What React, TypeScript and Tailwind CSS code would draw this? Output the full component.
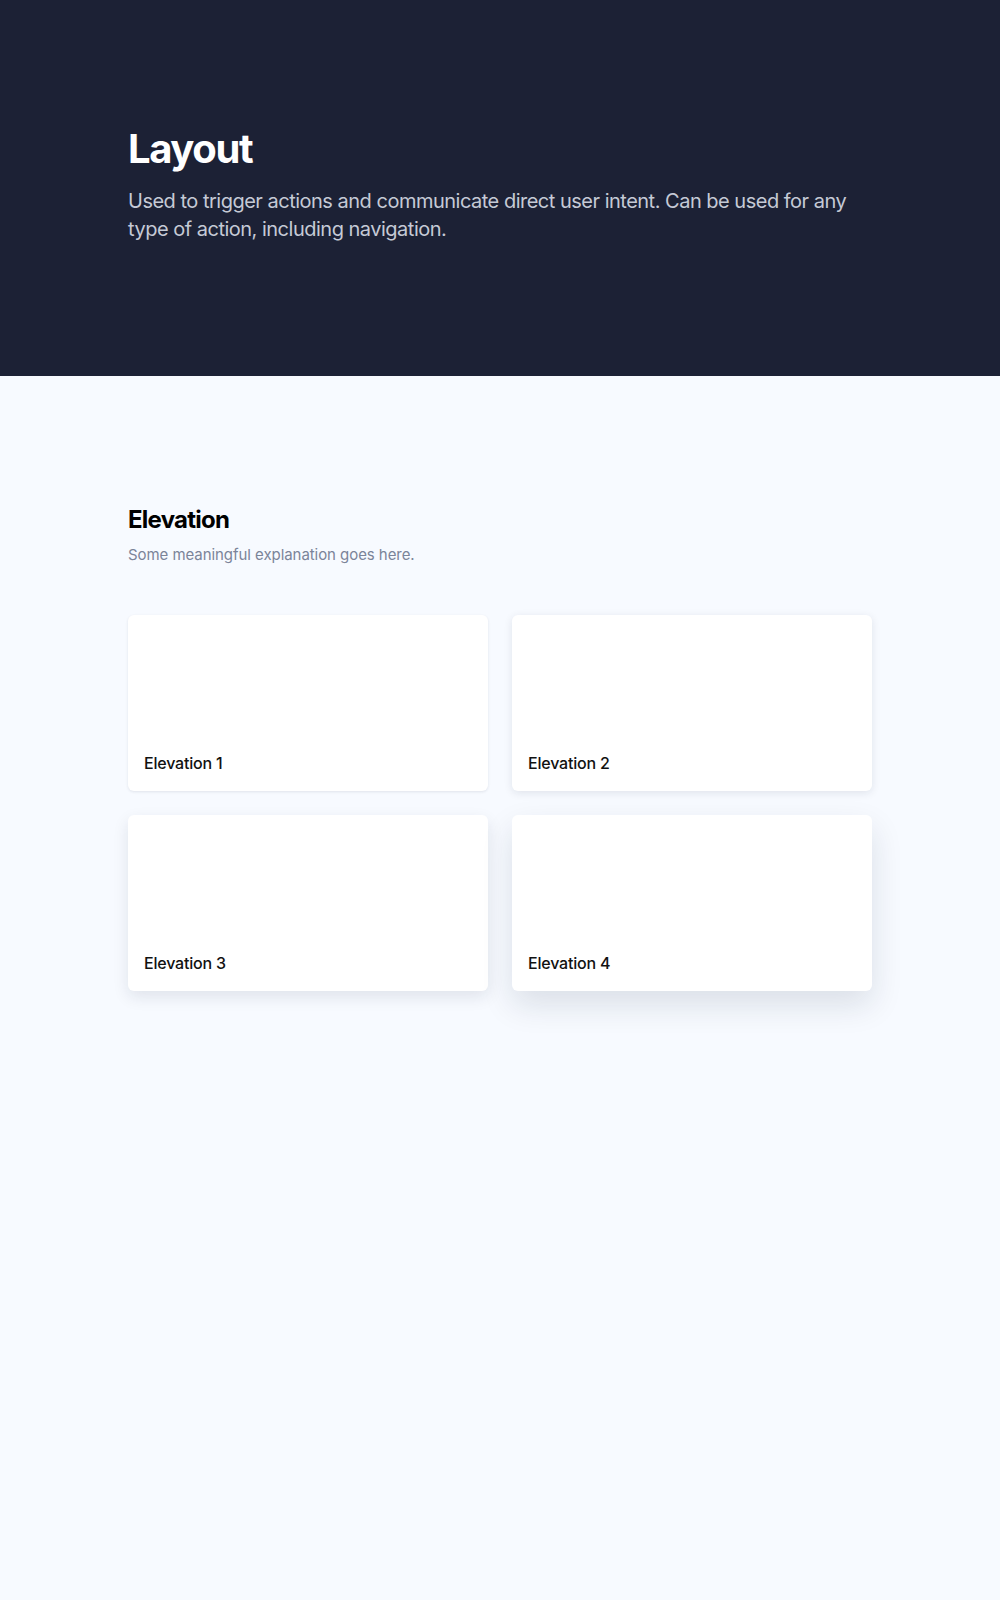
export default function App() {
  const cards = [
    { label: 'Elevation 1', shadow: 'shadow-[0_1px_3px_rgba(20,30,60,0.10)]' },
    { label: 'Elevation 2', shadow: 'shadow-[0_2px_8px_rgba(20,30,60,0.10)]' },
    { label: 'Elevation 3', shadow: 'shadow-[0_6px_16px_rgba(20,30,60,0.10)]' },
    { label: 'Elevation 4', shadow: 'shadow-[0_14px_32px_rgba(20,30,60,0.12)]' },
  ]

  return (
    <div className="min-h-[1600px] bg-[#f7faff]" style={{ fontFamily: 'Inter, "Noto Sans", sans-serif' }}>
      <header className="h-[376px] bg-[#1c2135] pt-[125px]">
        <div className="mx-auto max-w-[744px]">
          <h1 className="text-[40px] leading-[48px] font-bold tracking-[-0.035em] text-white">Layout</h1>
          <p className="mt-[14px] text-[20px] leading-[28px] tracking-[-0.025em] text-[#c5cad6]">
            Used to trigger actions and communicate direct user intent. Can be used for any type of action, including navigation.
          </p>
        </div>
      </header>

      <section className="pt-32">
        <div className="mx-auto max-w-[744px]">
          <h2 className="text-[24px] leading-[32px] font-bold tracking-[-0.032em] text-black">Elevation</h2>
          <p className="mt-[7px] text-[15px] leading-[24px] tracking-[-0.004em] text-[#7b8499]">Some meaningful explanation goes here.</p>

          <div className="mt-12 grid grid-cols-2 gap-6">
            {cards.map(c => (
              <div key={c.label} className={`flex h-[176px] flex-col justify-end rounded-md bg-white p-4 ${c.shadow}`}>
                <span className="text-[16px] leading-[24px] font-medium tracking-[-0.012em] text-[#111111]">{c.label}</span>
              </div>
            ))}
          </div>
        </div>
      </section>
    </div>
  )
}
